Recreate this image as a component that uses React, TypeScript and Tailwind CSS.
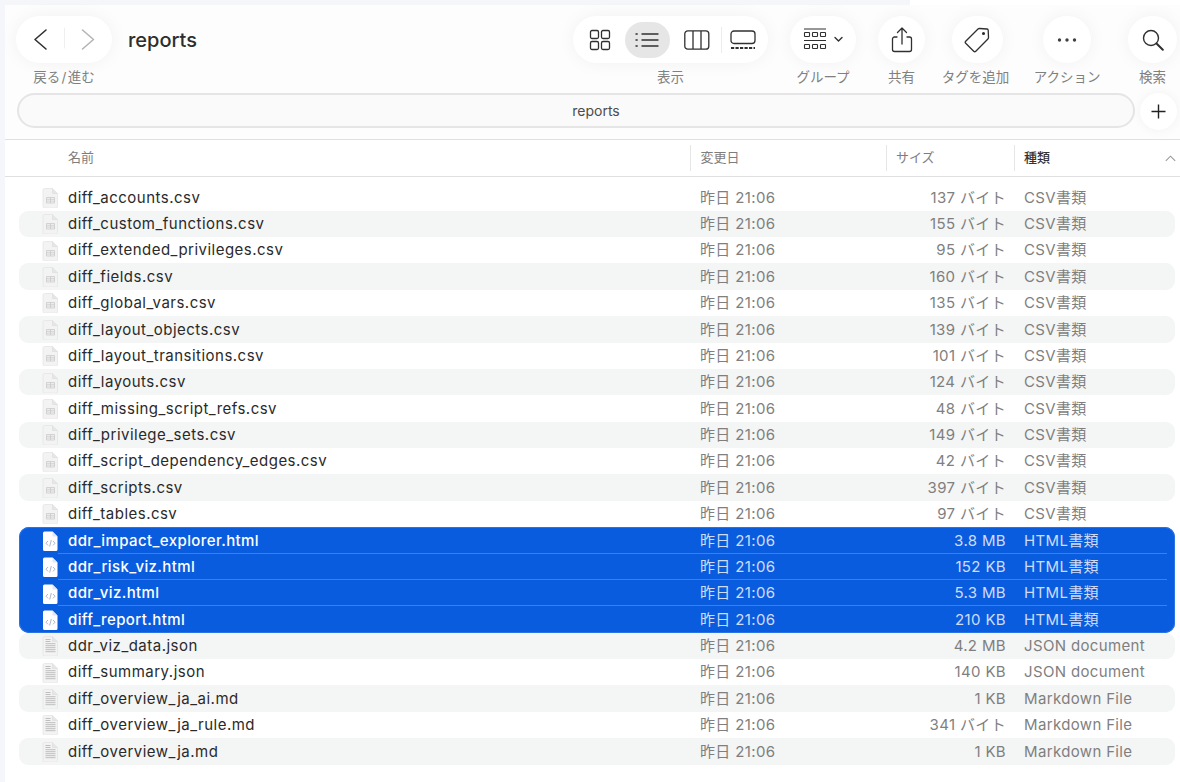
import React from 'react';

type FileRow = { name: string; size: string; kind: string; icon: 'csv' | 'html' | 'text' };

const csv = 'CSV書類';
const html = 'HTML書類';
const json = 'JSON document';
const md = 'Markdown File';

const files: FileRow[] = [
  { name: 'diff_accounts.csv', size: '137 バイト', kind: csv, icon: 'csv' },
  { name: 'diff_custom_functions.csv', size: '155 バイト', kind: csv, icon: 'csv' },
  { name: 'diff_extended_privileges.csv', size: '95 バイト', kind: csv, icon: 'csv' },
  { name: 'diff_fields.csv', size: '160 バイト', kind: csv, icon: 'csv' },
  { name: 'diff_global_vars.csv', size: '135 バイト', kind: csv, icon: 'csv' },
  { name: 'diff_layout_objects.csv', size: '139 バイト', kind: csv, icon: 'csv' },
  { name: 'diff_layout_transitions.csv', size: '101 バイト', kind: csv, icon: 'csv' },
  { name: 'diff_layouts.csv', size: '124 バイト', kind: csv, icon: 'csv' },
  { name: 'diff_missing_script_refs.csv', size: '48 バイト', kind: csv, icon: 'csv' },
  { name: 'diff_privilege_sets.csv', size: '149 バイト', kind: csv, icon: 'csv' },
  { name: 'diff_script_dependency_edges.csv', size: '42 バイト', kind: csv, icon: 'csv' },
  { name: 'diff_scripts.csv', size: '397 バイト', kind: csv, icon: 'csv' },
  { name: 'diff_tables.csv', size: '97 バイト', kind: csv, icon: 'csv' },
];

const selected: FileRow[] = [
  { name: 'ddr_impact_explorer.html', size: '3.8 MB', kind: html, icon: 'html' },
  { name: 'ddr_risk_viz.html', size: '152 KB', kind: html, icon: 'html' },
  { name: 'ddr_viz.html', size: '5.3 MB', kind: html, icon: 'html' },
  { name: 'diff_report.html', size: '210 KB', kind: html, icon: 'html' },
];

const rest: FileRow[] = [
  { name: 'ddr_viz_data.json', size: '4.2 MB', kind: json, icon: 'text' },
  { name: 'diff_summary.json', size: '140 KB', kind: json, icon: 'text' },
  { name: 'diff_overview_ja_ai.md', size: '1 KB', kind: md, icon: 'text' },
  { name: 'diff_overview_ja_rule.md', size: '341 バイト', kind: md, icon: 'text' },
  { name: 'diff_overview_ja.md', size: '1 KB', kind: md, icon: 'text' },
];

function FileIcon({ type }: { type: FileRow['icon'] }) {
  const outline = 'M2.500 0.500h8l5 5v13a1.500 1.500 0 0 1-1.500 1.500H2.500a1.500 1.500 0 0 1-1.500-1.500V2a1.500 1.500 0 0 1 1.500-1.500z';
  if (type === 'html') {
    return (
      <svg width="17" height="20" viewBox="0 0 17 20" fill="none">
        <path d={outline} fill="#ffffff" />
        <path d="M10.500 0.500v5h5" fill="#dfe6f5" />
        <path d="M6 10l-2 2.200 2 2.200M11 10l2 2.200-2 2.200M9.300 9l-1.600 6.500" stroke="#a3aec4" strokeWidth="0.9" />
      </svg>
    );
  }
  return (
    <svg width="17" height="20" viewBox="0 0 17 20" fill="none">
      <path d={outline} fill="#f3f3f3" stroke="#e4e4e4" strokeWidth="0.8" />
      <path d="M10.500 0.500v5h5" fill="#e6e6e6" stroke="#dcdcdc" strokeWidth="0.6" />
      {type === 'csv' ? (
        <path d="M4.500 9.500h8v5.500h-8zM4.500 11.300h8M4.500 13.100h8M8.500 9.500v5.500" stroke="#cacaca" strokeWidth="0.8" />
      ) : (
        <path d="M3.500 3.500h5M3.500 5.500h5M3.500 7.700h10M3.500 9.700h10M3.500 11.700h10M3.500 13.700h10M3.500 15.700h10" stroke="#b8b8b8" strokeWidth="0.9" />
      )}
    </svg>
  );
}

function Row({ file, shaded, active, divider }: { file: FileRow; shaded?: boolean; active?: boolean; divider?: boolean }) {
  const muted = active ? 'text-[#cfdcf8]' : 'text-[#7f7f7f]';
  return (
    <div className={`relative flex h-[26.38px] items-center pt-px text-[15px] tracking-[0.35px] ${shaded ? 'rounded-[9px] bg-[#f4f5f5]' : ''}`}>
      <div className="ml-[23px] flex w-[26px] shrink-0">
        <FileIcon type={file.icon} />
      </div>
      <div className={`w-[632px] shrink-0 whitespace-nowrap ${active ? 'font-medium tracking-[0.4px] text-white' : 'tracking-[0.48px] text-[#2a2a2a]'}`}>{file.name}</div>
      <div className={`w-[170px] shrink-0 ${muted}`}>昨日 21:06</div>
      <div className={`w-[136px] shrink-0 text-right ${muted}`}>{file.size}</div>
      <div className={`ml-[18px] whitespace-nowrap ${muted}`}>{file.kind}</div>
      {divider && <div className="absolute right-[8px] bottom-0 left-[39px] h-px bg-[#3b7fe8]" />}
    </div>
  );
}

function Label({ text }: { text: string }) {
  return <div className="mt-[5px] whitespace-nowrap text-[13.500px] leading-[18px] text-[#808080]">{text}</div>;
}

function ToolItem({ label, width, ml, children }: { label: string; width: number; ml: string; children: React.ReactNode }) {
  return (
    <div className={`flex flex-col items-center ${ml}`}>
      <div style={{ width }} className="flex h-[47px] items-center justify-center rounded-full bg-white shadow-[0_0_18px_rgba(0,0,0,0.05)]">
        {children}
      </div>
      <Label text={label} />
    </div>
  );
}

const stroke = { fill: 'none', stroke: '#303030', strokeWidth: 1.5, strokeLinecap: 'round' as const, strokeLinejoin: 'round' as const };

export default function App() {
  return (
    <div className="h-[782px] w-[1180px] overflow-hidden bg-white [font-family:Inter,'Noto_Sans_CJK_JP',sans-serif]">
      <div className="h-[5px] w-[910px] bg-[#f4f6fa]" />
      <div className="flex h-[777px]">
        <div className="w-[5px] shrink-0 bg-[#f4f6fb]" />
        <div className="flex min-w-0 flex-1 flex-col">
          <div className="flex h-[88px] items-start bg-[#fdfdfd] pt-[11px] pl-[11px]">
            <ToolItem label={'戻る\u200a/\u200a進む'} width={96} ml="">
              <svg width="96" height="47" viewBox="0 0 96 47" {...stroke}>
                <path d="M30 14l-11 9.500 11 9.500" strokeWidth="1.600" />
                <path d="M48.500 12v20" stroke="#efefef" strokeWidth="1" />
                <path d="M66.500 14l11 9.500-11 9.500" stroke="#b5b5b5" strokeWidth="1.600" />
              </svg>
            </ToolItem>
            <div className="ml-[16px] mt-[11px] text-[20px] font-medium leading-[26px] text-[#2e2e2e]">reports</div>
            <ToolItem label="表示" width={195} ml="ml-[376px]">
              <div className="flex h-[47px] items-center">
                <svg width="22" height="22" viewBox="0 0 22 22" className="ml-[3px]" fill="none" stroke="#303030" strokeWidth="1.300">
                  <rect x="1.500" y="1.500" width="8" height="8" rx="1.500" />
                  <rect x="12.500" y="1.500" width="8" height="8" rx="1.500" />
                  <rect x="1.500" y="12.500" width="8" height="8" rx="1.500" />
                  <rect x="12.500" y="12.500" width="8" height="8" rx="1.500" />
                </svg>
                <div className="ml-[14px] flex h-[36px] w-[45px] items-center justify-center rounded-full bg-[#e6e6e6]">
                  <svg width="24" height="16" viewBox="0 0 24 16" fill="none" stroke="#303030" strokeWidth="1.400" strokeLinecap="round">
                    <path d="M7 2h16M7 8h16M7 14h16M1 2h1.200M1 8h1.200M1 14h1.200" />
                  </svg>
                </div>
                <svg width="26" height="20" viewBox="0 0 26 20" className="ml-[14px]" fill="none" stroke="#303030" strokeWidth="1.300">
                  <rect x="0.800" y="0.800" width="24" height="18.400" rx="3" />
                  <path d="M9 1v18M17 1v18" />
                </svg>
                <div className="ml-[11px] h-[26px] w-px bg-[#ececec]" />
                <svg width="26" height="20" viewBox="0 0 26 20" className="ml-[8px]" fill="none" stroke="#303030" strokeWidth="1.300">
                  <rect x="1" y="1" width="24" height="12.500" rx="3" />
                  <path d="M1 18h24" strokeWidth="2" strokeDasharray="3.200 1.300" />
                </svg>
              </div>
            </ToolItem>
            <ToolItem label="グループ" width={66} ml="ml-[22px]">
              <svg width="42" height="24" viewBox="-1 0 42 24" fill="none" stroke="#303030" strokeWidth="1.100">
                <path d="M1 1h22M1 12.500h22" />
                <rect x="1.500" y="4.500" width="5" height="4" rx="0.600" />
                <rect x="9.500" y="4.500" width="5" height="4" rx="0.600" />
                <rect x="17.500" y="4.500" width="5" height="4" rx="0.600" />
                <rect x="1.500" y="16.500" width="5" height="4" rx="0.600" />
                <rect x="9.500" y="16.500" width="5" height="4" rx="0.600" />
                <rect x="17.500" y="16.500" width="5" height="4" rx="0.600" />
                <path d="M32 9.500l3.500 3.500 3.500-3.500" strokeWidth="1.400" strokeLinecap="round" strokeLinejoin="round" />
              </svg>
            </ToolItem>
            <ToolItem label="共有" width={47} ml="ml-[22px]">
              <svg width="22" height="26" viewBox="0 0 22 26" {...stroke} strokeWidth="1.300">
                <path d="M6 10H3.500A2 2 0 0 0 1.500 12v10.500a2 2 0 0 0 2 2h15a2 2 0 0 0 2-2V12a2 2 0 0 0-2-2H16" />
                <path d="M11 17V1M6.500 5.500L11 1l4.500 4.500" />
              </svg>
            </ToolItem>
            <div className="ml-[14px] flex w-[76px] flex-col items-center">
              <div className="flex h-[47px] w-[51px] items-center justify-center rounded-full bg-white shadow-[0_0_18px_rgba(0,0,0,0.05)]">
                <svg width="26" height="26" viewBox="0 0 26 26" {...stroke} strokeWidth="1.300">
                  <path d="M15.500 1.500l7.500 0.500a1.500 1.500 0 0 1 1.200 1.300l0.300 7.200a2 2 0 0 1-0.600 1.500L11.800 24.200a1.500 1.500 0 0 1-2.100 0L1.700 16.300a1.500 1.500 0 0 1 0-2.100L14 2a2 2 0 0 1 1.500-0.500z" />
                  <circle cx="19.500" cy="6.500" r="0.900" fill="#303030" />
                </svg>
              </div>
              <div className="-ml-[3px]">
                <Label text="タグを追加" />
              </div>
            </div>
            <div className="ml-[28px] flex w-[48px] flex-col items-center">
              <div className="flex h-[47px] w-[48px] items-center justify-center rounded-full bg-white shadow-[0_0_18px_rgba(0,0,0,0.05)]">
                <svg width="20" height="4" viewBox="0 0 20 4" fill="#404040">
                  <circle cx="2.500" cy="2" r="1.700" />
                  <circle cx="10" cy="2" r="1.700" />
                  <circle cx="17.500" cy="2" r="1.700" />
                </svg>
              </div>
              <Label text="アクション" />
            </div>
            <ToolItem label="検索" width={49} ml="ml-[37px]">
              <svg width="22" height="22" viewBox="0 0 22 22" {...stroke} strokeWidth="1.400">
                <circle cx="9" cy="9" r="7.500" />
                <path d="M14.500 14.500l6.300 6.300" strokeWidth="2" />
              </svg>
            </ToolItem>
          </div>
          <div className="flex h-[46px] items-start bg-[#fdfdfd] pl-[12px]">
            <div className="flex h-[35px] w-[1118px] items-center justify-center rounded-full border-2 border-[#e5e5e5] bg-[#fafafa] pl-[40px] text-[14px] text-[#4c4c4c]">
              reports
            </div>
            <div className="ml-[5px] flex h-[37px] w-[37px] items-center justify-center rounded-full bg-white shadow-[0_0_12px_rgba(0,0,0,0.05)]">
              <svg width="15" height="15" viewBox="0 0 15 15" fill="none" stroke="#222222" strokeWidth="1.400">
                <path d="M7.500 0.500v14M0.500 7.500h14" />
              </svg>
            </div>
          </div>
          <div className="flex h-[38px] items-center border-y border-[#e0e0e0] text-[13px] text-[#7e7e7e]">
            <div className="w-[684.500px] pl-[63px]">名前</div>
            <div className="flex h-[26px] w-[196.500px] items-center border-l border-[#e6e6e6] pl-[10px]">変更日</div>
            <div className="flex h-[26px] w-[128px] items-center border-l border-[#e6e6e6] pl-[9px]">サイズ</div>
            <div className="flex h-[26px] flex-1 items-center border-l border-[#e6e6e6] pl-[9px] font-medium text-[#333333]">種類</div>
            <svg width="11" height="7" viewBox="0 0 11 7" className="mr-[4px]" fill="none" stroke="#999999" strokeWidth="1.100">
              <path d="M0.800 5.800L5.500 1.200l4.700 4.600" />
            </svg>
          </div>
          <div className="ml-[14px] mr-[5px] mt-[7.300px]">
            {files.map((f, i) => (
              <Row key={f.name} file={f} shaded={i % 2 === 1} />
            ))}
            <div className="rounded-[10px] bg-[#0a5cdf] shadow-[inset_0_0_0_1px_#2a73e6]">
              {selected.map((f, i) => (
                <Row key={f.name} file={f} active divider={i < selected.length - 1} />
              ))}
            </div>
            {rest.map((f, i) => (
              <Row key={f.name} file={f} shaded={i % 2 === 0} />
            ))}
          </div>
        </div>
      </div>
    </div>
  );
}
